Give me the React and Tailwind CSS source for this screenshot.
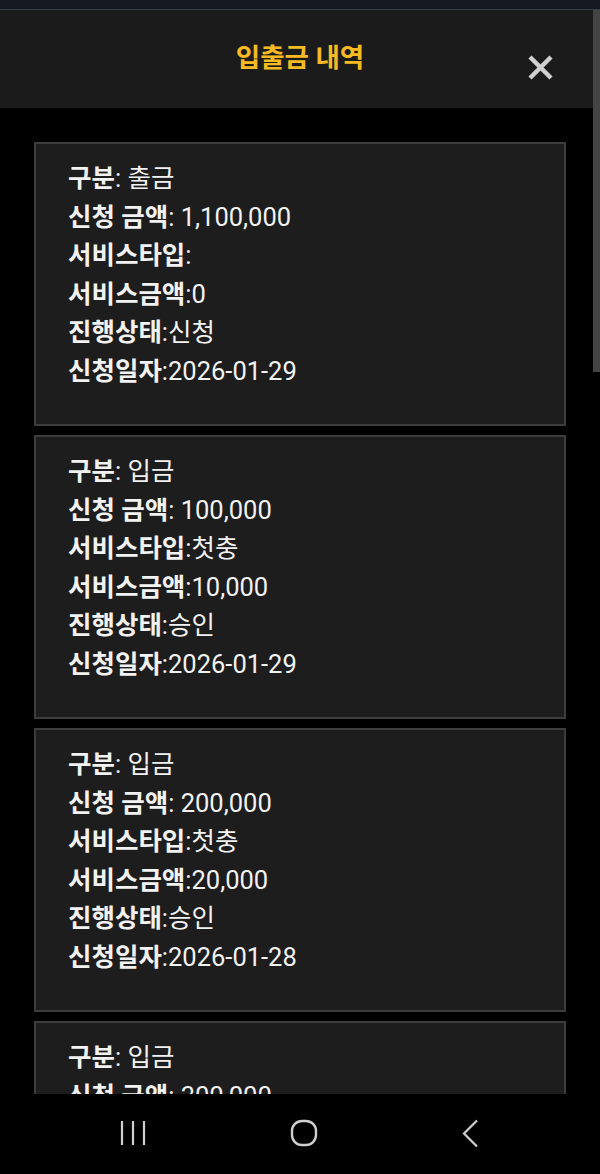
import React from "react";

const records = [
    { type: "출금", amount: "1,100,000", serviceType: "", serviceAmount: "0", status: "신청", date: "2026-01-29" },
    { type: "입금", amount: "100,000", serviceType: "첫충", serviceAmount: "10,000", status: "승인", date: "2026-01-29" },
    { type: "입금", amount: "200,000", serviceType: "첫충", serviceAmount: "20,000", status: "승인", date: "2026-01-28" },
    { type: "입금", amount: "300,000", serviceType: "첫충", serviceAmount: "30,000", status: "승인", date: "2026-01-28" },
];

const Row = ({ label, value, spaced }) => (
    <p className="h-[38.5px] leading-[38.5px] whitespace-nowrap">
        <span className="font-bold">{label}</span>
        <span>:{spaced ? " " : ""}{value}</span>
    </p>
);

const RecordCard = ({ item }) => (
    <div className="h-[284px] shrink-0 bg-[#1d1d1d] border-2 border-[#3d3d3d] pl-[32px] pt-[15px] text-[25.5px] text-[#f2f2f2]">
        <Row label="구분" value={item.type} spaced />
        <Row label="신청 금액" value={item.amount} spaced />
        <Row label="서비스타입" value={item.serviceType} />
        <Row label="서비스금액" value={item.serviceAmount} />
        <Row label="진행상태" value={item.status} />
        <Row label="신청일자" value={item.date} />
    </div>
);

export default function App() {
    return (
        <div
            className="relative w-[600px] h-[1174px] overflow-hidden bg-black flex flex-col"
            style={{ fontFamily: "Roboto, 'Noto Sans CJK KR', sans-serif" }}
        >
            {/* status strip */}
            <div className="h-[10px] shrink-0 bg-[#161821] border-b border-[#3b3d45]" />

            {/* header */}
            <div className="relative h-[98px] shrink-0 bg-[#1b1b1b] flex items-center justify-center">
                <h1 className="text-[26.5px] font-bold text-[#f6bb22] -mt-[2px]">입출금 내역</h1>
                <button className="absolute right-[46px] top-[44px] text-[#d0d0d0]">
                    <svg width="27" height="27" viewBox="0 0 27 27">
                        <path d="M3 3 L24 24 M24 3 L3 24" stroke="currentColor" strokeWidth="4.5" />
                    </svg>
                </button>
            </div>

            {/* list */}
            <div className="flex-1 overflow-hidden px-[34px] pt-[34px] flex flex-col gap-[9px]">
                {records.map((item, i) => (
                    <RecordCard key={i} item={item} />
                ))}
            </div>

            {/* scroll thumb */}
            <div className="absolute right-0 top-[10px] w-[7px] h-[362px] bg-[#444444]" />

            {/* android nav */}
            <div className="h-[80px] shrink-0 bg-black flex items-center justify-between pl-[119px] pr-[121px] pb-[2px] text-[#cfcfcf]">
                <svg width="28" height="26" viewBox="0 0 28 26">
                    <path d="M3 1 V25 M14 1 V25 M25 1 V25" stroke="currentColor" strokeWidth="2.2" />
                </svg>
                <svg width="28" height="28" viewBox="0 0 28 28">
                    <rect x="2" y="2" width="24" height="24" rx="10" fill="none" stroke="currentColor" strokeWidth="2.4" />
                </svg>
                <svg width="18" height="29" viewBox="0 0 18 29">
                    <path d="M16 1.5 L3 14.5 L16 27.5" fill="none" stroke="currentColor" strokeWidth="2.2" />
                </svg>
            </div>
        </div>
    );
}
